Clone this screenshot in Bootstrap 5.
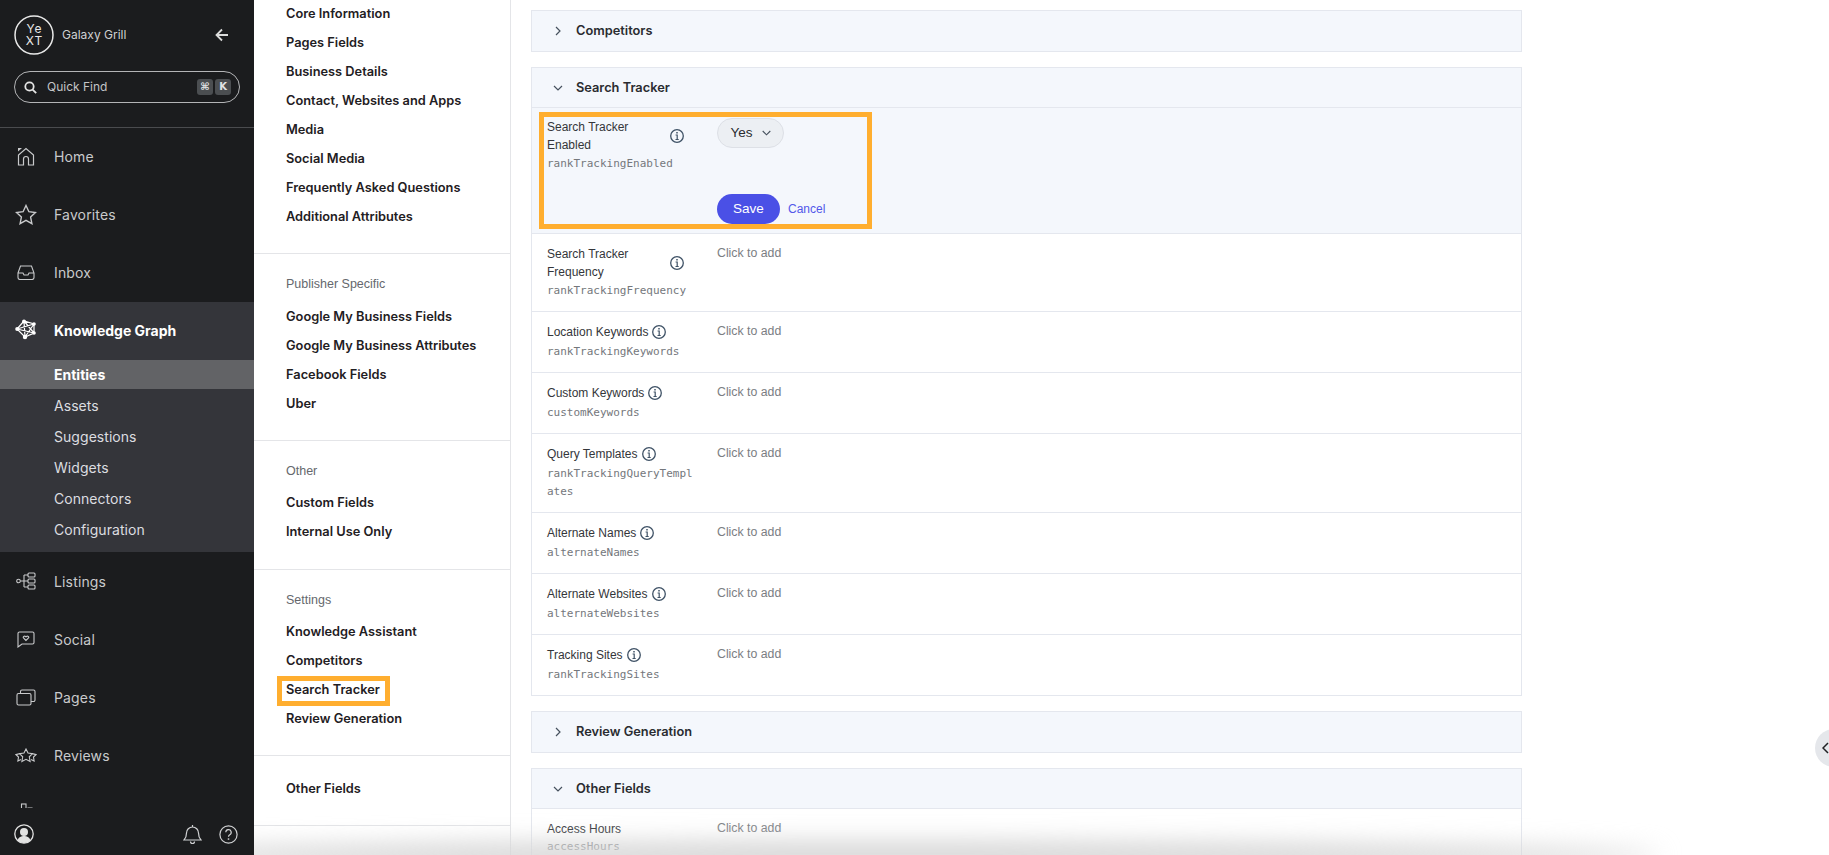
<!DOCTYPE html>
<html lang="en">
<head>
  <meta charset="UTF-8">
  <title>Galaxy Grill - Knowledge Graph</title>
  <link href="https://cdn.jsdelivr.net/npm/bootstrap@5.3.0/dist/css/bootstrap.min.css" rel="stylesheet">
  <style>
    html, body { height: 855px; overflow: hidden; }
    body { font-family: "Inter", sans-serif; color: #2d2f33; background: #fff; }
    svg { display: block; flex: none; }

    .app-side { width: 254px; height: 855px; background: #1b1c1e; color: #c9cacc; flex: none; position: relative; z-index: 2; }
    .side-top { height: 128px; flex: none; padding: 15px 14px 0; border-bottom: 1px solid #4a4b4e; }
    .brand-name { font-size: 12px; color: #cfd0d2; margin-left: 8px; }
    .back-arrow { margin-left: auto; margin-right: 11px; }
    .quick-find { height: 32px; margin-top: 16px; border: 1px solid #b4b5b7; border-radius: 16px; padding: 0 8px 0 9px; }
    .quick-find span.qf-text { font-size: 12px; margin-left: 10px; color: #c4c5c7; }
    .key-cap { width: 16px; height: 16px; border-radius: 3px; background: #4b4e51; color: #e2e3e5; font-size: 10px; font-weight: 700; line-height: 16px; text-align: center; font-family: "DejaVu Sans", sans-serif; margin-left: 2px; }
    .side-scroll { flex: 1 1 0; overflow: hidden; min-height: 0; }
    .side-item { height: 58px; padding: 0 0 2px 14px; font-size: 14px; letter-spacing: .15px; color: #c9cacc; }
    .kg-group ~ .side-item { padding-bottom: 0; }
    .side-icon { width: 24px; margin-right: 16px; display: flex; justify-content: center; }
    .kg-group { background: #34353a; padding-bottom: 7px; }
    .kg-group .side-item { color: #fff; font-weight: 700; letter-spacing: 0; }
    .sub-item { height: 31px; line-height: 31px; padding-left: 54px; font-size: 14px; letter-spacing: .05px; color: #dcdde0; }
    .sub-item.is-on { height: 29px; line-height: 29px; margin-bottom: 1px; background: #626366; color: #fff; font-weight: 700; letter-spacing: 0; }
    .side-foot { height: 47px; flex: none; padding: 5px 16px 0 14px; background: #1b1c1e; }
    .foot-help { margin-left: 17px; }

    .field-nav { width: 257px; height: 855px; border-right: 1px solid #e4e5e8; flex: none; overflow: hidden; position: relative; }
    .nav-block { padding: 0 0 23px 32px; border-bottom: 1px solid #e4e5e8; }
    .nav-block + .nav-block { padding-top: 20px; }
    .nav-block.is-first { margin-top: -1px; padding-bottom: 22px; }
    .nav-block.is-tight { padding-bottom: 22px; }
    .nav-block.is-plain { padding-top: 17.5px; }
    .nav-head { font-size: 12.5px; color: #65686d; line-height: 20px; margin-bottom: 7px; font-family: "Liberation Sans", sans-serif; }
    .nav-block.is-tight.is-wide .nav-head { margin-bottom: 8px; }
    .nav-lnk { display: block; font-size: 12.8px; font-weight: 600; line-height: 29px; color: #1f2023; text-decoration: none; }
    .nav-mark { position: absolute; left: 23px; top: 676px; width: 113px; height: 30px; border: 5px solid #ffae2f; }

    .main-pane { flex: 1 1 auto; height: 855px; overflow: hidden; padding: 10px 0 0 20px; position: relative; font-family: "Liberation Sans", sans-serif; }
    .sect { width: 991px; margin-bottom: 15px; border: 1px solid #e4e7ee; }
    .sect-head { height: 40px; padding-left: 20px; background: #f4f7fc; font-family: "Inter", sans-serif; font-size: 12.8px; font-weight: 600; color: #2a2c30; }
    .sect-head svg { margin-right: 12px; }
    .sect-head.is-open { border-bottom: 1px solid #e4e7ee; }
    .fld { display: flex; border-bottom: 1px solid #e4e7ee; padding: 11px 0 11px 15px; font-size: 12px; line-height: 18px; }
    .fld:last-child { border-bottom: 0; }
    .fld-label { width: 170px; flex: none; }
    .fld-name { color: #34363a; display: flex; align-items: center; gap: 4px; width: 147px; }
    .fld-name.is-split { justify-content: space-between; padding-right: 10px; }
    .fld-key { font-family: "DejaVu Sans Mono", monospace; font-size: 11px; color: #74777c; width: 147px; word-break: break-all; margin-top: 2px; line-height: 18px; }
    .fld-name.is-split + .fld-key { margin-top: 1px; }
    .sect:last-child .fld-key { margin-top: 0; }
    .fld-val { color: #7b7e83; margin-top: -1px; font-size: 12.3px; }
    .fld-edit { background: #f4f7fc; position: relative; height: 126px; padding-top: 10px; }
    .yes-pill { height: 30px; width: 67px; padding: 0; border: 1px solid #dde0e6; background: #eceff3; color: #2a2c30; font-size: 13.5px; border-radius: 15px; }
    .yes-pill svg { margin-left: 9px; }
    .save-row { margin-top: 46px; }
    .save-btn { width: 63px; height: 30px; padding: 0; border: 0; background: #4a50e6; color: #fff; font-size: 13.5px; border-radius: 15px; }
    .cancel-lnk { font-size: 12px; color: #5257ea; text-decoration: none; margin-left: 8px; }
    .edit-mark { position: absolute; left: 7px; top: 4px; width: 333px; height: 117px; border: 5px solid #ffae2f; pointer-events: none; }

    .page-fade { position: absolute; left: 100px; bottom: -16px; width: 1560px; height: 30px; background: #d6d6d6; border-radius: 50%; filter: blur(12px); pointer-events: none; }
    .side-handle { position: absolute; right: -24px; top: 729px; width: 38px; height: 38px; border-radius: 50%; background: #e5e7eb; padding: 13px 0 0 7px; }
  </style>
</head>
<body>
  <div class="d-flex position-relative">

    <div class="app-side d-flex flex-column">
      <div class="side-top">
        <div class="d-flex align-items-center">
          <svg width="40" height="40" viewBox="0 0 40 40" fill="none">
            <circle cx="20" cy="20" r="19" stroke="#e8e8e8" stroke-width="1.500"/>
            <text x="20.500" y="18" text-anchor="middle" font-family="Inter" font-size="12" letter-spacing="1" fill="#e8e8e8">Ye</text>
            <text x="20.500" y="29.500" text-anchor="middle" font-family="Inter" font-size="12" letter-spacing="1" fill="#e8e8e8">XT</text>
          </svg>
          <span class="brand-name">Galaxy Grill</span>
          <svg class="back-arrow" width="14" height="14" viewBox="0 0 14 14" fill="none" stroke="#dcdcdc" stroke-width="1.800"><path d="M13 7H2M7 1.500 1.500 7 7 12.500"/></svg>
        </div>
        <div class="quick-find d-flex align-items-center">
          <svg width="13" height="13" viewBox="0 0 13 13" fill="none" stroke="#e4e4e4" stroke-width="1.800"><circle cx="5.500" cy="5.500" r="4.200"/><path d="m8.600 8.600 3.600 3.600"/></svg>
          <span class="qf-text">Quick Find</span>
          <span class="key-cap ms-auto">⌘</span>
          <span class="key-cap">K</span>
        </div>
      </div>

      <div class="side-scroll">
        <div class="side-item d-flex align-items-center">
          <span class="side-icon"><svg width="18" height="19" viewBox="0 0 18 19" fill="none" stroke="#c9cacc" stroke-width="1.200"><path d="M1.500 18V8L9 1.500l7.500 6.500v10h-5v-6a2.500 2.500 0 0 0-5 0v6z"/><path d="M1 1h4L1 4.500z" fill="#c9cacc" stroke="none"/></svg></span>Home
        </div>
        <div class="side-item d-flex align-items-center">
          <span class="side-icon"><svg width="22" height="21" viewBox="0 0 22 21" fill="none" stroke="#c9cacc" stroke-width="1.400"><path d="m11 1.500 2.900 6.200 6.600.8-4.900 4.600 1.300 6.600L11 16.400l-5.900 3.300 1.300-6.600L1.500 8.500l6.600-.8z"/></svg></span>Favorites
        </div>
        <div class="side-item d-flex align-items-center">
          <span class="side-icon"><svg width="18" height="15" viewBox="0 0 18 15" fill="none" stroke="#c9cacc" stroke-width="1.100"><path d="M1 8 3.500 1h11L17 8v4.500a2 2 0 0 1-2 2H3a2 2 0 0 1-2-2zM1 8h5l1 2h4l1-2h5"/></svg></span>Inbox
        </div>

        <div class="kg-group">
          <div class="side-item d-flex align-items-center">
            <span class="side-icon"><svg width="22" height="22" viewBox="0 0 22 22" fill="none" stroke="#fff" stroke-width="1.200"><path d="M9 2 2 10l8 8 9-4V5zM9 2l10 12M2 10l17-5M2 10l17 4M9 2l1 16M19 5l-9 13"/><g fill="#fff" stroke="none"><circle cx="9" cy="2.500" r="2"/><circle cx="2.200" cy="10" r="2"/><circle cx="10" cy="18" r="2.200"/><circle cx="19" cy="14" r="1.800"/><circle cx="19" cy="5" r="1.800"/></g></svg></span>Knowledge Graph
          </div>
          <div class="sub-item is-on">Entities</div>
          <div class="sub-item">Assets</div>
          <div class="sub-item">Suggestions</div>
          <div class="sub-item">Widgets</div>
          <div class="sub-item">Connectors</div>
          <div class="sub-item">Configuration</div>
        </div>

        <div class="side-item d-flex align-items-center">
          <span class="side-icon"><svg width="20" height="18" viewBox="0 0 20 18" fill="none" stroke="#c9cacc" stroke-width="1.100"><circle cx="2.500" cy="9" r="1.800"/><path d="M4.300 9H12M8 3v12M8 3h4M8 15h4"/><rect x="12" y="1" width="7" height="4" rx="1"/><rect x="12" y="7" width="7" height="4" rx="1"/><rect x="12" y="13" width="7" height="4" rx="1"/></svg></span>Listings
        </div>
        <div class="side-item d-flex align-items-center">
          <span class="side-icon"><svg width="18" height="17" viewBox="0 0 18 17" fill="none" stroke="#c9cacc" stroke-width="1.100"><path d="M2.500 1h13A1.500 1.500 0 0 1 17 2.500v9a1.500 1.500 0 0 1-1.500 1.500H5l-4 3V2.500A1.500 1.500 0 0 1 2.500 1z"/><path d="M9 9.500 6.500 7c-1-1.300.8-2.600 2.500-1.200C10.700 4.400 12.500 5.700 11.500 7z"/></svg></span>Social
        </div>
        <div class="side-item d-flex align-items-center">
          <span class="side-icon"><svg width="20" height="17" viewBox="0 0 20 17" fill="none" stroke="#c9cacc" stroke-width="1.100"><rect x="1" y="4.500" width="14" height="11.500" rx="1.500"/><path d="M4.500 4.500V2.500A1.500 1.500 0 0 1 6 1h11.500A1.500 1.500 0 0 1 19 2.500V11a1.500 1.500 0 0 1-1.500 1.500H15"/></svg></span>Pages
        </div>
        <div class="side-item d-flex align-items-center">
          <span class="side-icon"><svg width="22" height="15" viewBox="0 0 22 15" fill="none" stroke="#c9cacc" stroke-width="1.100"><path d="m11 1 2 4 4.500.6-3.200 3.200.8 4.700L11 11.300l-4.100 2.200.8-4.700L4.500 5.600 9 5zM4.500 5.600l-3.500 1 2.500 2.400-.6 4 3-1.600M17.500 5.600l3.500 1-2.500 2.400.6 4-3-1.600"/></svg></span>Reviews
        </div>
        <div class="side-item d-flex align-items-center">
          <span class="side-icon"><svg width="18" height="20" viewBox="0 0 18 20" fill="none" stroke="#c9cacc" stroke-width="1.100"><rect x="4.500" y="1" width="4.500" height="18"/><path d="M10.500 5h4.500v14h-4.500"/></svg></span>
        </div>
      </div>

      <div class="side-foot d-flex align-items-center">
        <svg width="20" height="20" viewBox="0 0 20 20"><circle cx="10" cy="10" r="9.200" fill="#1b1c1e" stroke="#e2e2e2" stroke-width="1.300"/><circle cx="10" cy="8" r="4" fill="#e2e2e2"/><path d="M3.500 16.500c1-3.500 4-4.500 6.500-4.500s5.500 1 6.500 4.500A9 9 0 0 1 10 19a9 9 0 0 1-6.500-2.500z" fill="#e2e2e2"/></svg>
        <svg class="ms-auto" width="19" height="21" viewBox="0 0 19 21" fill="none" stroke="#d0d1d3" stroke-width="1.200"><path d="M1 16c2-2 2.500-3.500 2.500-7a6 6 0 0 1 12 0c0 3.500.5 5 2.500 7zM7.500 17.500a2 2 0 0 0 4 0M9.500 1v2"/></svg>
        <svg class="foot-help" width="19" height="19" viewBox="0 0 19 19" fill="none" stroke="#d0d1d3" stroke-width="1.200"><circle cx="9.500" cy="9.500" r="8.600"/><path d="M6.800 7.300a2.700 2.700 0 1 1 4 2.400c-.9.500-1.300 1-1.300 2"/><path d="M9.500 13.300v1.500" stroke-width="1.500"/></svg>
      </div>
    </div>

    <div class="field-nav">
      <div class="nav-block is-first">
        <a class="nav-lnk" href="#">Core Information</a>
        <a class="nav-lnk" href="#">Pages Fields</a>
        <a class="nav-lnk" href="#">Business Details</a>
        <a class="nav-lnk" href="#">Contact, Websites and Apps</a>
        <a class="nav-lnk" href="#">Media</a>
        <a class="nav-lnk" href="#">Social Media</a>
        <a class="nav-lnk" href="#">Frequently Asked Questions</a>
        <a class="nav-lnk" href="#">Additional Attributes</a>
      </div>
      <div class="nav-block is-tight is-wide">
        <div class="nav-head">Publisher Specific</div>
        <a class="nav-lnk" href="#">Google My Business Fields</a>
        <a class="nav-lnk" href="#">Google My Business Attributes</a>
        <a class="nav-lnk" href="#">Facebook Fields</a>
        <a class="nav-lnk" href="#">Uber</a>
      </div>
      <div class="nav-block">
        <div class="nav-head">Other</div>
        <a class="nav-lnk" href="#">Custom Fields</a>
        <a class="nav-lnk" href="#">Internal Use Only</a>
      </div>
      <div class="nav-block is-tight">
        <div class="nav-head">Settings</div>
        <a class="nav-lnk" href="#">Knowledge Assistant</a>
        <a class="nav-lnk" href="#">Competitors</a>
        <a class="nav-lnk" href="#">Search Tracker</a>
        <a class="nav-lnk" href="#">Review Generation</a>
      </div>
      <div class="nav-block is-plain is-tight">
        <a class="nav-lnk" href="#">Other Fields</a>
      </div>
      <div class="nav-mark"></div>
    </div>

    <div class="main-pane">
      <div class="sect">
        <div class="sect-head d-flex align-items-center">
          <svg width="12" height="12" viewBox="0 0 12 12" fill="none" stroke="#46515e" stroke-width="1.200"><path d="m4 2 4 4-4 4"/></svg>Competitors
        </div>
      </div>

      <div class="sect">
        <div class="sect-head is-open d-flex align-items-center">
          <svg width="12" height="12" viewBox="0 0 12 12" fill="none" stroke="#46515e" stroke-width="1.200"><path d="m2 4 4 4 4-4"/></svg>Search Tracker
        </div>

        <div class="fld fld-edit">
          <div class="fld-label">
            <div class="fld-name is-split"><span>Search Tracker<br>Enabled</span>
              <svg width="14" height="14" viewBox="0 0 14 14" fill="none" stroke="#3f5266"><circle cx="7" cy="7" r="6.300" stroke-width="1.300"/><path d="M7 3v1.400" stroke-width="1.500"/><path d="M5.600 6H7.200v4.500M5.500 10.500h3.200" stroke-width="1.200"/></svg>
            </div>
            <div class="fld-key">rankTrackingEnabled</div>
          </div>
          <div>
            <button type="button" class="yes-pill btn d-flex align-items-center justify-content-center">Yes<svg width="9" height="6" viewBox="0 0 9 6" fill="none" stroke="#46515e" stroke-width="1.100"><path d="m.7 1 3.800 3.800L8.300 1"/></svg></button>
            <div class="save-row d-flex align-items-center">
              <button type="button" class="save-btn btn">Save</button>
              <a class="cancel-lnk" href="#">Cancel</a>
            </div>
          </div>
          <div class="edit-mark"></div>
        </div>

        <div class="fld">
          <div class="fld-label">
            <div class="fld-name is-split"><span>Search Tracker<br>Frequency</span>
              <svg width="14" height="14" viewBox="0 0 14 14" fill="none" stroke="#3f5266"><circle cx="7" cy="7" r="6.300" stroke-width="1.300"/><path d="M7 3v1.400" stroke-width="1.500"/><path d="M5.600 6H7.200v4.500M5.500 10.500h3.200" stroke-width="1.200"/></svg>
            </div>
            <div class="fld-key">rankTrackingFrequency</div>
          </div>
          <div class="fld-val">Click to add</div>
        </div>

        <div class="fld">
          <div class="fld-label">
            <div class="fld-name">Location Keywords <svg width="14" height="14" viewBox="0 0 14 14" fill="none" stroke="#3f5266"><circle cx="7" cy="7" r="6.300" stroke-width="1.300"/><path d="M7 3v1.400" stroke-width="1.500"/><path d="M5.600 6H7.200v4.500M5.500 10.500h3.200" stroke-width="1.200"/></svg></div>
            <div class="fld-key">rankTrackingKeywords</div>
          </div>
          <div class="fld-val">Click to add</div>
        </div>

        <div class="fld">
          <div class="fld-label">
            <div class="fld-name">Custom Keywords <svg width="14" height="14" viewBox="0 0 14 14" fill="none" stroke="#3f5266"><circle cx="7" cy="7" r="6.300" stroke-width="1.300"/><path d="M7 3v1.400" stroke-width="1.500"/><path d="M5.600 6H7.200v4.500M5.500 10.500h3.200" stroke-width="1.200"/></svg></div>
            <div class="fld-key">customKeywords</div>
          </div>
          <div class="fld-val">Click to add</div>
        </div>

        <div class="fld">
          <div class="fld-label">
            <div class="fld-name">Query Templates <svg width="14" height="14" viewBox="0 0 14 14" fill="none" stroke="#3f5266"><circle cx="7" cy="7" r="6.300" stroke-width="1.300"/><path d="M7 3v1.400" stroke-width="1.500"/><path d="M5.600 6H7.200v4.500M5.500 10.500h3.200" stroke-width="1.200"/></svg></div>
            <div class="fld-key">rankTrackingQueryTemplates</div>
          </div>
          <div class="fld-val">Click to add</div>
        </div>

        <div class="fld">
          <div class="fld-label">
            <div class="fld-name">Alternate Names <svg width="14" height="14" viewBox="0 0 14 14" fill="none" stroke="#3f5266"><circle cx="7" cy="7" r="6.300" stroke-width="1.300"/><path d="M7 3v1.400" stroke-width="1.500"/><path d="M5.600 6H7.200v4.500M5.500 10.500h3.200" stroke-width="1.200"/></svg></div>
            <div class="fld-key">alternateNames</div>
          </div>
          <div class="fld-val">Click to add</div>
        </div>

        <div class="fld">
          <div class="fld-label">
            <div class="fld-name">Alternate Websites <svg width="14" height="14" viewBox="0 0 14 14" fill="none" stroke="#3f5266"><circle cx="7" cy="7" r="6.300" stroke-width="1.300"/><path d="M7 3v1.400" stroke-width="1.500"/><path d="M5.600 6H7.200v4.500M5.500 10.500h3.200" stroke-width="1.200"/></svg></div>
            <div class="fld-key">alternateWebsites</div>
          </div>
          <div class="fld-val">Click to add</div>
        </div>

        <div class="fld">
          <div class="fld-label">
            <div class="fld-name">Tracking Sites <svg width="14" height="14" viewBox="0 0 14 14" fill="none" stroke="#3f5266"><circle cx="7" cy="7" r="6.300" stroke-width="1.300"/><path d="M7 3v1.400" stroke-width="1.500"/><path d="M5.600 6H7.200v4.500M5.500 10.500h3.200" stroke-width="1.200"/></svg></div>
            <div class="fld-key">rankTrackingSites</div>
          </div>
          <div class="fld-val">Click to add</div>
        </div>
      </div>

      <div class="sect">
        <div class="sect-head d-flex align-items-center">
          <svg width="12" height="12" viewBox="0 0 12 12" fill="none" stroke="#46515e" stroke-width="1.200"><path d="m4 2 4 4-4 4"/></svg>Review Generation
        </div>
      </div>

      <div class="sect">
        <div class="sect-head is-open d-flex align-items-center">
          <svg width="12" height="12" viewBox="0 0 12 12" fill="none" stroke="#46515e" stroke-width="1.200"><path d="m2 4 4 4 4-4"/></svg>Other Fields
        </div>
        <div class="fld">
          <div class="fld-label">
            <div class="fld-name">Access Hours</div>
            <div class="fld-key">accessHours</div>
          </div>
          <div class="fld-val">Click to add</div>
        </div>
      </div>
    </div>

    <div class="page-fade"></div>
    <div class="side-handle"><svg width="7" height="12" viewBox="0 0 7 12" fill="none" stroke="#1f2023" stroke-width="1.500"><path d="M6 1 1 6l5 5"/></svg></div>
  </div>
  <script src="https://cdn.jsdelivr.net/npm/bootstrap@5.3.0/dist/js/bootstrap.bundle.min.js"></script>
</body>
</html>
